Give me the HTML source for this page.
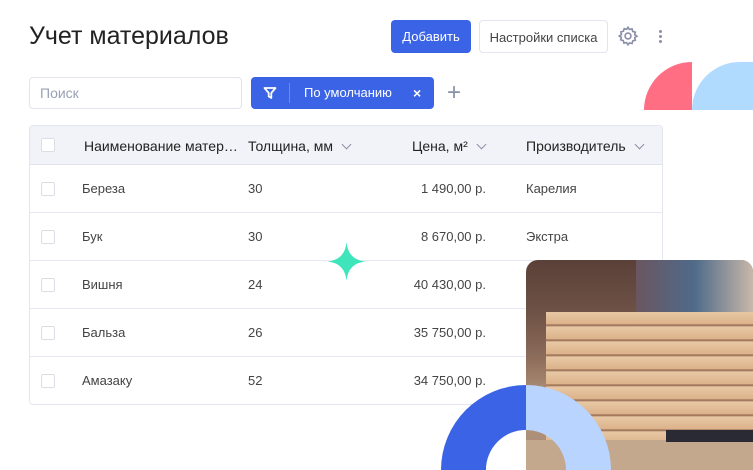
<!DOCTYPE html><html><head><meta charset="utf-8"><style>
*{box-sizing:border-box;margin:0;padding:0}
body{width:753px;height:470px;overflow:hidden;background:#fff;font-family:"Liberation Sans",sans-serif;position:relative;color:#333}
.a{position:absolute}
h1{position:absolute;left:29px;top:22px;font-size:25px;font-weight:400;color:#222}
.btn{position:absolute;top:20px;height:33px;border-radius:4px;font-size:13px;line-height:33px;text-align:center}
.tbl{left:29px;top:125px;width:634px;height:280px;border:1px solid #e4e6ee;border-radius:4px;overflow:hidden}
.hd{position:absolute;left:0;top:0;width:100%;height:39px;background:#f2f3f8;border-bottom:1px solid #e1e3ec}
.row{position:absolute;left:0;width:100%;height:48px;border-bottom:1px solid #e8e8f2;font-size:13px;color:#444}
.cb{position:absolute;left:11px;width:14px;height:14px;border:1px solid #dcdee6;border-radius:2px;background:#fff}
.t{position:absolute;line-height:14px}
.hd .t{font-size:14px;color:#222;top:13px}
.chev{display:inline-block;width:7px;height:7px;border-right:1.5px solid #8a90a8;border-bottom:1.5px solid #8a90a8;transform:rotate(45deg);margin-left:10px;position:relative;top:-3px}
</style></head><body>
<h1>Учет материалов</h1>
<div class="btn" style="left:391px;width:80px;background:#3a63e6;color:#fff">Добавить</div>
<div class="btn" style="left:479px;width:129px;border:1px solid #e2e4ee;color:#444">Настройки списка</div>
<svg class="a" style="left:617px;top:25px" width="22" height="22" viewBox="0 0 24 24" fill="none" stroke="#8a90a8" stroke-width="1.8"><circle cx="12" cy="12" r="3.2"/><path d="M12 2.5l1.6 2.4 2.8-.7.8 2.8 2.8.8-.7 2.8 2.4 1.6-2.4 1.6.7 2.8-2.8.8-.8 2.8-2.8-.7L12 21.5l-1.6-2.4-2.8.7-.8-2.8-2.8-.8.7-2.8L2.5 12l2.4-1.6-.7-2.8 2.8-.8.8-2.8 2.8.7z"/></svg>
<div class="a" style="left:659px;top:30px;width:3px;height:3px;border-radius:50%;background:#8a90a8;box-shadow:0 5px 0 #8a90a8,0 10px 0 #8a90a8"></div>
<div class="a" style="left:29px;top:77px;width:213px;height:32px;border:1px solid #e2e4ee;border-radius:4px;font-size:14px;color:#9aa0b4;line-height:30px;padding-left:10px">Поиск</div>
<div class="a" style="left:251px;top:77px;width:183px;height:32px;background:#3a63e6;border-radius:4px;color:#fff;font-size:13px;line-height:32px">
<svg class="a" style="left:12px;top:9px" width="14" height="14" viewBox="0 0 14 14" fill="none" stroke="#fff" stroke-width="1.8" stroke-linejoin="round"><path d="M1.5 2h11L8.3 7v5L5.7 10.5V7z"/></svg>
<div class="a" style="left:38px;top:6px;width:1px;height:20px;background:#6b8cf0"></div>
<span class="a" style="left:53px">По умолчанию</span><span class="a" style="left:162px;font-size:14px;font-weight:bold">×</span></div>
<div class="a" style="left:447px;top:84px;font-size:24px;color:#8a90a8;line-height:18px">+</div>
<div class="a" style="left:644px;top:62px;width:48px;height:48px;background:#ff6e83;border-radius:48px 0 0 0"></div>
<div class="a" style="left:692px;top:62px;width:61px;height:48px;background:#b0dbff;border-radius:48px 0 0 0"></div>
<div class="a tbl">
<div class="hd"><div class="cb" style="top:12px"></div>
<div class="t" style="left:54px">Наименование матер…</div>
<div class="t" style="left:218px">Толщина, мм<span class="chev"></span></div>
<div class="t" style="left:382px">Цена, м²<span class="chev"></span></div>
<div class="t" style="left:496px">Производитель<span class="chev"></span></div></div>
<div class="row" style="top:39px"><div class="cb" style="top:17px"></div><div class="t" style="left:52px;top:17px">Береза</div><div class="t" style="left:218px;top:17px">30</div><div class="t" style="right:176px;top:17px">1 490,00 р.</div><div class="t" style="left:496px;top:17px">Карелия</div></div>
<div class="row" style="top:87px"><div class="cb" style="top:17px"></div><div class="t" style="left:52px;top:17px">Бук</div><div class="t" style="left:218px;top:17px">30</div><div class="t" style="right:176px;top:17px">8 670,00 р.</div><div class="t" style="left:496px;top:17px">Экстра</div></div>
<div class="row" style="top:135px"><div class="cb" style="top:17px"></div><div class="t" style="left:52px;top:17px">Вишня</div><div class="t" style="left:218px;top:17px">24</div><div class="t" style="right:176px;top:17px">40 430,00 р.</div></div>
<div class="row" style="top:183px"><div class="cb" style="top:17px"></div><div class="t" style="left:52px;top:17px">Бальза</div><div class="t" style="left:218px;top:17px">26</div><div class="t" style="right:176px;top:17px">35 750,00 р.</div></div>
<div class="row" style="top:231px;border:0"><div class="cb" style="top:17px"></div><div class="t" style="left:52px;top:17px">Амазаку</div><div class="t" style="left:218px;top:17px">52</div><div class="t" style="right:176px;top:17px">34 750,00 р.</div></div>
</div>
<svg class="a" style="left:327px;top:242px" width="39" height="39" viewBox="0 0 39 39"><path d="M19.5 0Q21 18 39 19.5Q21 21 19.5 39Q18 21 0 19.5Q18 18 19.5 0z" fill="#3ee5bb"/></svg>
<div class="a" style="left:526px;top:260px;width:227px;height:210px;border-radius:12px 12px 0 0;overflow:hidden;background:linear-gradient(180deg,#5a4038 0%,#6e5246 25%,#8a6a58 45%,#b99a80 70%,#a08470 100%)">
<div class="a" style="left:110px;top:0;width:117px;height:60px;background:linear-gradient(90deg,#6a5660,#4f6a8a,#c8b8a8)"></div>
<div class="a" style="left:20px;top:52px;width:207px;height:130px;background:repeating-linear-gradient(180deg,#e8c8a4 0px,#dcb28a 12px,#8a6048 13px,#e8c8a4 15px)"></div>
<div class="a" style="left:0;top:180px;width:227px;height:30px;background:#c4a88e"></div>
<div class="a" style="left:140px;top:170px;width:87px;height:12px;background:#2a2a35"></div>
</div>
<svg class="a" style="left:441px;top:385px" width="170" height="85" viewBox="0 0 170 85"><path d="M85 0A85 85 0 0 0 0 85H45A40 40 0 0 1 85 45z" fill="#3a63e6"/><path d="M85 0A85 85 0 0 1 170 85H125A40 40 0 0 0 85 45z" fill="#b9d4ff"/><path d="M85 45A40 40 0 0 0 45 85H85z" fill="#fff"/></svg>
</body></html>
